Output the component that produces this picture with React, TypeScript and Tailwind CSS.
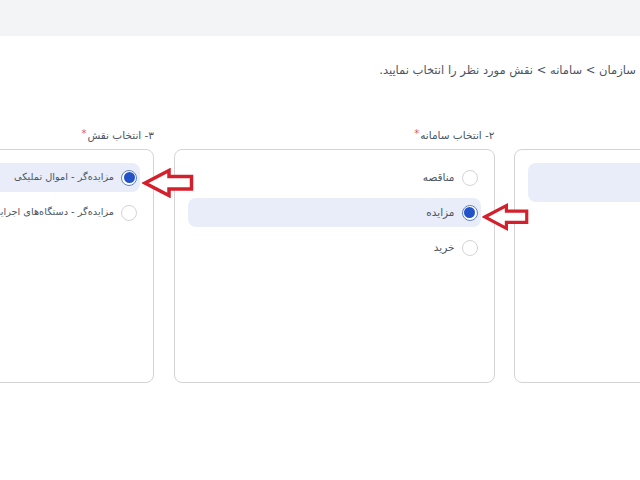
import React from 'react';

const FONT = 'font-["DejaVu_Sans",sans-serif]';

const Radio: React.FC<{ checked?: boolean }> = ({ checked }) =>
  checked ? (
    <span className="flex h-4 w-4 shrink-0 items-center justify-center rounded-full border border-[#5f7fc4] bg-white">
      <span className="h-[11px] w-[11px] rounded-full bg-[#2152c8]" />
    </span>
  ) : (
    <span className="h-4 w-4 shrink-0 rounded-full border border-[#d4d4d8] bg-white" />
  );

const Option: React.FC<{ label: string; checked?: boolean; small?: boolean }> = ({ label, checked, small }) => (
  <div className={`flex h-[29px] items-center gap-[7px] rounded-lg pr-[3px] ${checked ? 'bg-[#e8edf9]' : ''}`}>
    <Radio checked={checked} />
    <span className={`whitespace-nowrap text-[#4b5563] ${small ? 'text-[9.75px]' : 'text-[10.5px]'}`}>{label}</span>
  </div>
);

const Column: React.FC<{ title: string; children: React.ReactNode }> = ({ title, children }) => (
  <div className="flex w-[321px] shrink-0 flex-col">
    <div className="flex h-[21px] items-start text-[10.5px] text-[#4b5563]">
      <span>{title}</span>
      <span className="mr-px -mt-0.5 text-[10px] text-[#e05a5a]">*</span>
    </div>
    <div className="flex h-[234px] flex-col gap-1.5 rounded-lg border border-[#d4d4d4] bg-white px-[13px] pt-[13px]">
      {children}
    </div>
  </div>
);

const Arrow: React.FC<{ className: string }> = ({ className }) => (
  <svg className={className} viewBox="0 0 52 30" fill="#ffffff" stroke="#d3202c" strokeWidth="3.5">
    <path d="M3 15 L27 2.5 L27 8.5 L49.5 8.5 L49.5 21 L27 21 L27 27.5 Z" />
  </svg>
);

const App: React.FC = () => {
  return (
    <div dir="rtl" className={`relative h-[480px] w-[640px] overflow-hidden bg-white ${FONT}`}>
      {/* Top bar */}
      <div className="h-9 bg-[#f3f4f6]" />

      <div className="mr-[-195px] w-[1002px]">
        <p className="mt-[26px] mr-[129px] whitespace-nowrap text-[11.5px] leading-4 text-[#4b5563]">
          لطفا به ترتیب سازمان &gt; سامانه &gt; نقش مورد نظر را انتخاب نمایید.
        </p>

        <div className="mt-[50px] flex gap-[19.5px]">
          <Column title="۱- انتخاب سازمان">
            <div className="h-[39px] rounded-lg bg-[#e8edf9]" />
          </Column>
          <Column title="۲- انتخاب سامانه">
            <Option label="مناقصه" />
            <Option label="مزایده" checked />
            <Option label="خرید" />
          </Column>
          <Column title="۳- انتخاب نقش">
            <Option label="مزایده‌گر - اموال تملیکی" checked small />
            <Option label="مزایده‌گر - دستگاه‌های اجرایی" small />
          </Column>
        </div>
      </div>

      {/* Annotation arrows */}
      <Arrow className="absolute left-[142px] top-[168px] h-[30px] w-[52px]" />
      <Arrow className="absolute left-[482px] top-[203px] h-[28px] w-[47px]" />
    </div>
  );
};

export default App;
